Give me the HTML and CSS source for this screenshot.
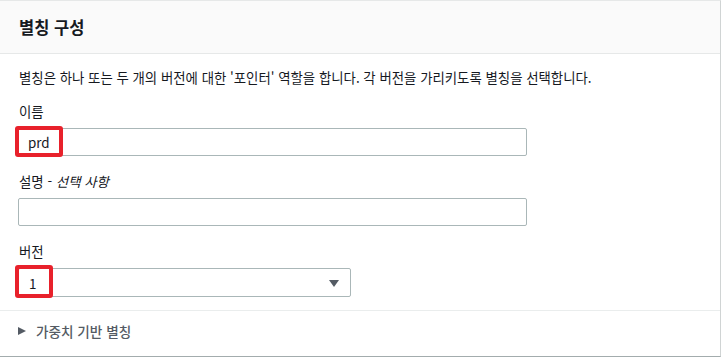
FILE: index.html
```html
<!DOCTYPE html>
<html lang="ko">
<head>
<meta charset="utf-8">
<link rel="stylesheet" href="styles.css">
</head>
<body>
<div class="panel">
  <div class="panel-header"><h2 class="title">별칭 구성</h2></div>
  <div class="panel-body">
    <p class="desc">별칭은 하나 또는 두 개의 버전에 대한 '포인터' 역할을 합니다. 각 버전을 가리키도록 별칭을 선택합니다.</p>
    <div class="field field-first">
      <div class="label">이름</div>
      <div class="control-wrap">
        <div class="input wide"><span class="val">prd</span></div>
        <span class="mark mark-name"></span>
      </div>
    </div>
    <div class="field">
      <div class="label">설명 - <em>선택 사항</em></div>
      <div class="input wide"></div>
    </div>
    <div class="field">
      <div class="label">버전</div>
      <div class="control-wrap">
        <div class="input select"><span class="val">1</span><span class="caret"></span></div>
        <span class="mark mark-ver"></span>
      </div>
    </div>
  </div>
  <div class="expander">
    <span class="exp-caret"></span>
    <span class="exp-text">가중치 기반 별칭</span>
  </div>
</div>
</body>
</html>
```

FILE: styles.css
```css
html, body {
  margin: 0;
  padding: 0;
  background: #ffffff;
}
body {
  font-family: "Noto Sans CJK KR", "Noto Sans", "Liberation Sans", sans-serif;
  font-size: 13.4px;
  color: #16191f;
}
.panel {
  width: 721px;
  height: 357px;
  box-sizing: border-box;
  border-top: 1px solid #e6e8e8;
  border-right: 1px solid #d0d4d4;
  border-bottom: 1px solid #a3acad;
  display: flex;
  flex-direction: column;
}
.panel-header {
  height: 52px;
  background: #fafafa;
  border-bottom: 1px solid #e6e8e8;
  display: flex;
  align-items: center;
  padding-left: 19px;
}
.title {
  margin: 0;
  font-size: 16.5px;
  font-weight: 700;
  line-height: 22px;
  color: #16191f;
}
.panel-body {
  padding: 13px 18px 13px 18px;
  border-bottom: 1px solid #eaeded;
}
.desc {
  margin: 0;
  line-height: 20px;
  padding-left: 1px;
}
.field { margin-top: 15px; }
.field-first { margin-top: 14px; }
.label {
  line-height: 20px;
  padding-left: 1px;
  margin-bottom: 7px;
}
.label em { font-style: italic; }
.control-wrap { position: relative; }
.input {
  box-sizing: border-box;
  height: 28px;
  border: 1px solid #aab7b8;
  border-radius: 2px;
  background: #fff;
  display: flex;
  align-items: center;
  padding-left: 9px;
  line-height: 20px;
}
.wide { width: 509px; }
.select {
  width: 333px;
  height: 29px;
  position: relative;
  padding-left: 10px;
}
.caret {
  position: absolute;
  right: 11px;
  top: 11px;
  width: 0;
  height: 0;
  border-left: 5px solid transparent;
  border-right: 5px solid transparent;
  border-top: 7px solid #545b64;
}
.mark {
  position: absolute;
  border: 4px solid #e8212b;
  border-radius: 3px;
  box-sizing: border-box;
}
.mark-name {
  left: -3px;
  top: -2px;
  width: 48px;
  height: 31px;
}
.mark-ver {
  left: -3px;
  top: -3px;
  width: 38px;
  height: 33px;
}
.expander {
  display: flex;
  align-items: center;
  height: 40px;
  padding-left: 18px;
  color: #545b64;
  font-weight: 500;
}
.exp-caret {
  width: 0;
  height: 0;
  border-top: 4.5px solid transparent;
  border-bottom: 4.5px solid transparent;
  border-left: 8px solid #545b64;
  margin-right: 10px;
}
.exp-text { line-height: 20px; font-size: 13.6px; }
```
